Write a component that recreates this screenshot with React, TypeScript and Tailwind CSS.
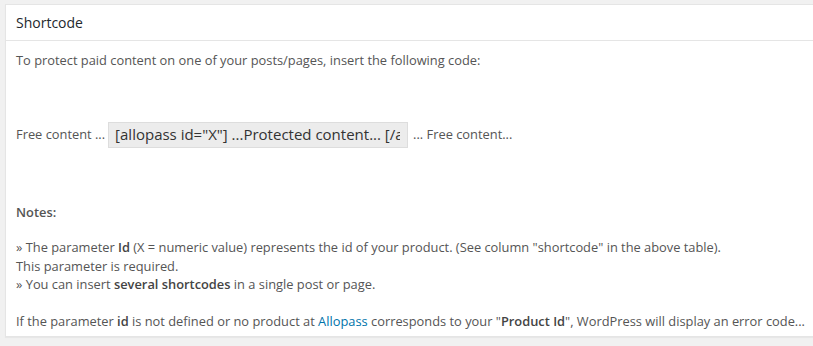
export default function App() {
  return (
    <div className="w-[813px] h-[346px] overflow-hidden bg-[#f1f1f1] pl-[5px] pt-[4px] font-['Open_Sans',sans-serif] text-[12.85px] text-[#555]">
      {/* Postbox */}
      <div className="w-[830px] bg-white border border-[#e5e5e5] shadow-[0_1px_1px_rgba(0,0,0,0.04)]">
        <div className="h-[36px] flex items-center px-[10px] border-b border-[#e5e5e5]">
          <h3 className="text-[14px] text-[#23282d] leading-none">Shortcode</h3>
        </div>

        <div className="flex flex-col px-[10px] pt-[10px] pb-[6px] leading-[18.5px]">
          <p>To protect paid content on one of your posts/pages, insert the following code:</p>

          <div className="mt-[52px] flex items-center">
            <span>Free content ...</span>
            <span className="ml-[3px] w-[300px] h-[26px] px-[6px] flex items-center overflow-hidden whitespace-nowrap bg-[#ececec] border border-[#dddddd] text-[15px] text-[#333]">
              <span className="block w-[285px] overflow-hidden">[allopass id="X"] ...Protected content... [/allopass]</span>
            </span>
            <span className="ml-[5px]">... Free content...</span>
          </div>

          <p className="mt-[55px] font-semibold">Notes:</p>

          <p className="mt-[17px]">
            » The parameter <b className="font-semibold text-[#444]">Id</b> (X = numeric value) represents the id of your product. (See column "shortcode" in the above table).
            <br />
            This parameter is required.
            <br />
            » You can insert <b className="font-semibold text-[#444]">several shortcodes</b> in a single post or page.
          </p>

          <p className="mt-[18px]">
            If the parameter <b className="font-semibold text-[#444]">id</b> is not defined or no product at{' '}
            <a className="text-[#0073aa]">Allopass</a> corresponds to your "<b className="font-semibold text-[#444]">Product Id</b>", WordPress will display an error code...
          </p>
        </div>
      </div>
    </div>
  );
}
